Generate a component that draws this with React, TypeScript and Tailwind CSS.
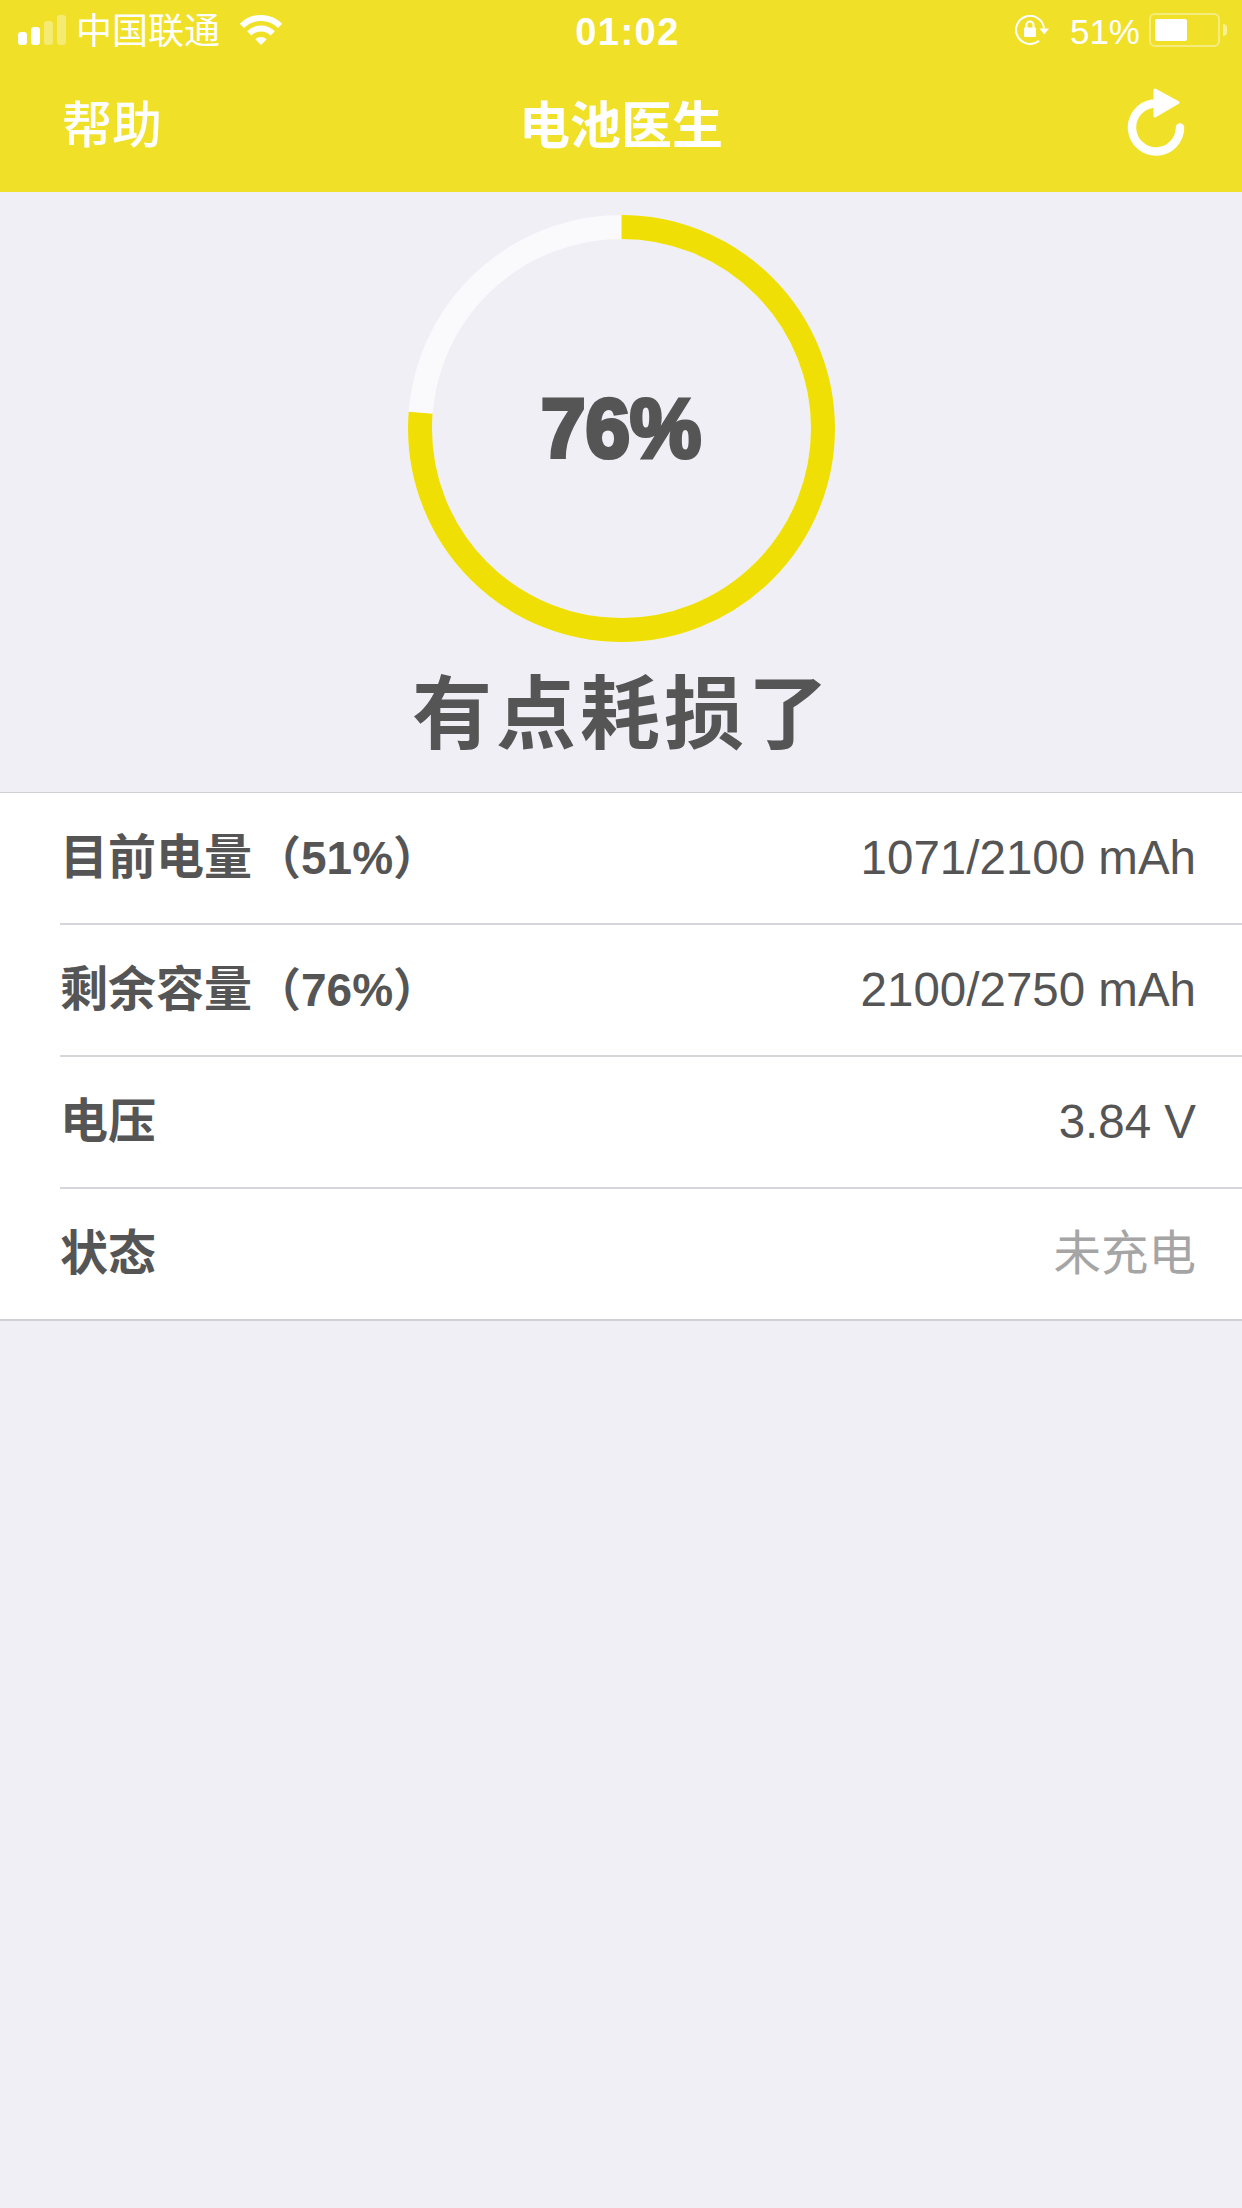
import React from 'react';

const sans = 'font-["Liberation_Sans","Noto_Sans_CJK_SC",sans-serif]';

const rows = [
  { label: '目前电量', pct: '（51%）', value: '1071/2100 mAh', muted: false },
  { label: '剩余容量', pct: '（76%）', value: '2100/2750 mAh', muted: false },
  { label: '电压', pct: '', value: '3.84 V', muted: false },
  { label: '状态', pct: '', value: '未充电', muted: true },
];

const SignalBars = () => (
  <svg width="48" height="30" viewBox="0 0 48 30" fill="#fff">
    <rect x="0" y="17" width="9" height="13" rx="3" />
    <rect x="13" y="12" width="9" height="18" rx="3" />
    <rect x="26" y="6" width="9" height="24" rx="3" opacity="0.35" />
    <rect x="39" y="0" width="9" height="30" rx="3" opacity="0.35" />
  </svg>
);

const WifiIcon = () => (
  <svg width="42" height="30" viewBox="0 0 42 30" fill="none" stroke="#fff" strokeWidth="6">
    <path d="M1.9 10.9A27 27 0 0 1 40.1 10.9" />
    <path d="M9.3 18.3A16.5 16.5 0 0 1 32.7 18.3" />
    <path d="M21 30L15.3 24.3A8 8 0 0 1 26.7 24.3Z" fill="#fff" stroke="none" />
  </svg>
);

const RotationLock = () => (
  <svg width="36" height="30" viewBox="0 0 36 30" fill="none">
    <path d="M24 25.700A14 14 0 1 1 29 13.500" stroke="#fff" strokeWidth="2" />
    <path d="M24.500 13.500H34L29.200 19.500Z" fill="#fff" />
    <rect x="9" y="12.500" width="12" height="9.500" rx="1" fill="#fff" />
    <path d="M11.500 13V10A3.500 3.500 0 0 1 18.500 10V13" stroke="#fff" strokeWidth="2" />
  </svg>
);

const Battery = () => (
  <div className="flex items-center gap-[3px]">
    <div className="flex h-[34px] w-[71px] items-center rounded-[6px] border-2 border-white/40 px-[4px]">
      <div className="h-[22px] w-[32px] rounded-[2px] bg-white" />
    </div>
    <div className="h-[12px] w-[4px] rounded-r-full bg-white/50" />
  </div>
);

const RefreshIcon = () => (
  <svg width="58" height="68" viewBox="0 0 58 68" fill="none">
    <path d="M53 39.500A24 24 0 1 1 25 15.800" stroke="#fff" strokeWidth="8.500" strokeLinecap="round" />
    <path d="M28 2L51 14.500L28 28Z" fill="#fff" stroke="#fff" strokeWidth="3" strokeLinejoin="round" />
  </svg>
);

const Gauge = () => (
  <div className="relative h-[427px] w-[427px]">
    <svg width="427" height="427" viewBox="0 0 427 427" fill="none">
      <circle cx="213.500" cy="213.500" r="201.500" stroke="#fafafc" strokeWidth="24" />
      <circle
        cx="213.500"
        cy="213.500"
        r="201.500"
        stroke="#efdf05"
        strokeWidth="24"
        pathLength={100}
        strokeDasharray="76.250 100"
        transform="rotate(-90 213.500 213.500)"
      />
    </svg>
    <div className={`absolute inset-0 flex scale-y-105 items-center justify-center text-[80px] leading-none font-bold tracking-[0px] text-[#555] [-webkit-text-stroke:4px_#555] ${sans}`}>
      76%
    </div>
  </div>
);

export default function App() {
  return (
    <div className={`flex min-h-[2208px] w-full flex-col bg-[#efeff5] ${sans}`}>
      {/* Yellow header */}
      <header className="h-[192px] bg-[#f0e028] text-white">
        <div className="flex h-[60px] items-center justify-between pr-[15px] pl-[18px]">
          <div className="flex w-[400px] items-center">
            <SignalBars />
            <span className="mt-[3px] ml-[10px] text-[36px] leading-none">中国联通</span>
            <span className="ml-[20px] flex"><WifiIcon /></span>
          </div>
          <span className="mt-[3px] ml-[10px] text-[38px] leading-none font-bold tracking-[1.500px]">01:02</span>
          <div className="flex w-[400px] items-center justify-end">
            <RotationLock />
            <span className="mt-[3px] mr-[9px] ml-[19px] text-[35px] leading-none">51%</span>
            <Battery />
          </div>
        </div>
        <div className="grid h-[132px] grid-cols-3 items-center px-[57px]">
          <span className="pl-[5px] text-[50px] leading-none font-medium">帮助</span>
          <span className="text-center text-[51px] leading-none font-bold">电池医生</span>
          <span className="mb-[8px] flex justify-end"><RefreshIcon /></span>
        </div>
      </header>

      {/* Gauge */}
      <section className="flex h-[600px] flex-col items-center pt-[23px]">
        <Gauge />
        <h1 className="mt-[25px] ml-[2px] text-[80px] leading-[96px] font-bold tracking-[4px] text-[#555]">有点耗损了</h1>
      </section>

      {/* Battery details */}
      <section className="border-t border-b-2 border-[#d0d0d5] bg-white pl-[60px]">
        {rows.map((row, i) => (
          <div
            key={row.label}
            className={`flex items-center justify-between pr-[46px] ${i < rows.length - 1 ? 'h-[132px] border-b-2 border-[#d6d6da]' : 'h-[130px]'}`}
          >
            <span className="text-[48px] leading-none font-bold text-[#555]">
              {row.label}
              {row.pct && <span className="ml-[3px] text-[46px]">{row.pct}</span>}
            </span>
            <span className={`text-[47.500px] leading-none ${row.muted ? 'text-[#a5a5a5]' : 'text-[#555]'}`}>{row.value}</span>
          </div>
        ))}
      </section>
    </div>
  );
}
